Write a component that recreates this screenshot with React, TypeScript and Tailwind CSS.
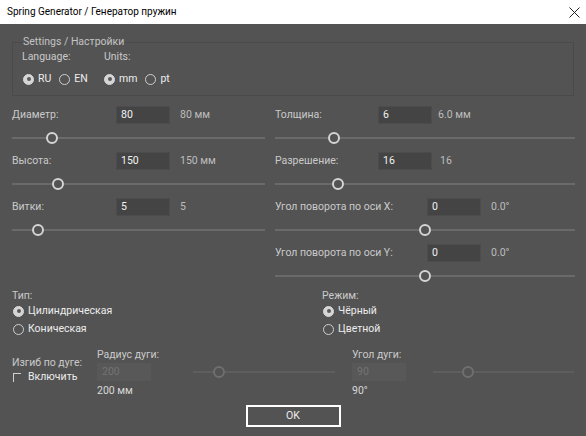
import React from "react";

type FieldDef = {
  label: string;
  value: string;
  note: string;
  labelW: string;
  noteMl: string;
  thumb: number;
};

const leftFields: FieldDef[] = [
  { label: "Диаметр:", value: "80", note: "80 мм", labelW: "w-[104px]", noteMl: "ml-[10px]", thumb: 40 },
  { label: "Высота:", value: "150", note: "150 мм", labelW: "w-[104px]", noteMl: "ml-[10px]", thumb: 46 },
  { label: "Витки:", value: "5", note: "5", labelW: "w-[104px]", noteMl: "ml-[10px]", thumb: 26 },
];

const rightFields: FieldDef[] = [
  { label: "Толщина:", value: "6", note: "6.0 мм", labelW: "w-[103px]", noteMl: "ml-[6px]", thumb: 59 },
  { label: "Разрешение:", value: "16", note: "16", labelW: "w-[103px]", noteMl: "ml-[8px]", thumb: 63 },
  { label: "Угол поворота по оси X:", value: "0", note: "0.0°", labelW: "w-[152px]", noteMl: "ml-[10px]", thumb: 150 },
  { label: "Угол поворота по оси Y:", value: "0", note: "0.0°", labelW: "w-[152px]", noteMl: "ml-[10px]", thumb: 150 },
];

// thumb = distance from the track start to the knob centre
const Slider = ({ thumb, disabled }: { thumb: number; disabled?: boolean }) => (
  <div className="flex items-center w-full">
    <div className={`h-[2px] ${disabled ? "bg-[#5e5e5e]" : "bg-[#6a6a6a]"}`} style={{ width: thumb - 6 }} />
    <div
      className={`w-[12px] h-[12px] rounded-full border-2 shrink-0 ${
        disabled ? "border-[#6f6f6f]" : "border-[#d4d4d4]"
      }`}
    />
    <div className={`h-[2px] flex-1 ${disabled ? "bg-[#5e5e5e]" : "bg-[#6a6a6a]"}`} />
  </div>
);

const NumberBox = ({ value, disabled }: { value: string; disabled?: boolean }) => (
  <div
    className={`w-[54px] h-[18px] shrink-0 flex items-center pl-[4px] border ${
      disabled ? "bg-[#585858] border-[#585858] text-[#737373]" : "bg-[#444444] border-[#4c4c4c] text-[#f2f2f2]"
    }`}
  >
    {value}
  </div>
);

const Field = ({ f }: { f: FieldDef }) => (
  <div className="flex flex-col">
    <div className="flex items-center h-[19px]">
      <span className={`${f.labelW} shrink-0 text-[#cacaca]`}>{f.label}</span>
      <NumberBox value={f.value} />
      <span className={`${f.noteMl} text-[#bdbdbd]`}>{f.note}</span>
    </div>
    <div className="h-[27px] flex items-center">
      <Slider thumb={f.thumb} />
    </div>
  </div>
);

const Radio = ({ checked, label }: { checked?: boolean; label: string }) => (
  <div className="flex items-center gap-[4px]">
    <span
      className={`w-[11px] h-[11px] rounded-full border shrink-0 flex items-center justify-center ${
        checked ? "bg-[#d6d6d6] border-[#d6d6d6]" : "border-[#cfcfcf]"
      }`}
    >
      {checked && <span className="w-[4px] h-[4px] rounded-full bg-[#5a5a5a]" />}
    </span>
    <span className="text-[#ededed]">{label}</span>
  </div>
);

export default function App() {
  return (
    <div
      className="w-[586px] h-[436px] bg-[#535353] flex flex-col text-[10.5px] leading-[14px]"
      style={{ fontFamily: 'Roboto, "Liberation Sans", Arial, sans-serif' }}
    >
      {/* window caption */}
      <div className="h-[24px] bg-white flex items-center justify-between pl-[7px] pr-[6px] text-[10px] text-black">
        <span>Spring Generator / Генератор пружин</span>
        <svg width="11" height="11" viewBox="0 0 11 11">
          <path d="M0.5 0.5 L10.5 10.5 M10.5 0.5 L0.5 10.5" stroke="#222" strokeWidth="1" />
        </svg>
      </div>

      <div className="px-3 pt-[11px] flex flex-col">
        {/* settings group */}
        <fieldset className="border border-[#4a4a4a] h-[61px] px-[9px] pb-[6px]">
          <legend className="text-[#c4c4c4] px-px">Settings / Настройки</legend>
          <div className="grid grid-cols-[82px_auto] text-[#cacaca]">
            <span className="mt-px">Language:</span>
            <span className="mt-px">Units:</span>
            <div className="flex items-center gap-[8px] mt-[8px] ml-[1px]">
              <Radio checked label="RU" />
              <Radio label="EN" />
            </div>
            <div className="flex items-center gap-[8px] mt-[8px]">
              <Radio checked label="mm" />
              <Radio label="pt" />
            </div>
          </div>
        </fieldset>

        {/* numeric parameters */}
        <div className="grid grid-cols-[253px_300px] gap-x-[10px] mt-[9px]">
          <div className="flex flex-col">
            {leftFields.map((f) => (
              <Field key={f.label} f={f} />
            ))}
          </div>
          <div className="flex flex-col">
            {rightFields.map((f) => (
              <Field key={f.label} f={f} />
            ))}
          </div>
        </div>

        {/* type / mode */}
        <div className="flex">
          <div className="w-[310px] flex flex-col">
            <span className="text-[#cacaca] h-[13px]">Тип:</span>
            <div className="h-[18px] flex items-center ml-[1px]">
              <Radio checked label="Цилиндрическая" />
            </div>
            <div className="h-[18px] flex items-center ml-[1px]">
              <Radio label="Коническая" />
            </div>
          </div>
          <div className="flex flex-col">
            <span className="text-[#cacaca] h-[13px]">Режим:</span>
            <div className="h-[18px] flex items-center ml-[1px]">
              <Radio checked label="Чёрный" />
            </div>
            <div className="h-[18px] flex items-center ml-[1px]">
              <Radio label="Цветной" />
            </div>
          </div>
        </div>

        {/* arc bending */}
        <div className="flex mt-[10px]">
          <div className="w-[85px] flex flex-col pt-[8px]">
            <span className="text-[#cacaca]">Изгиб по дуге:</span>
            <div className="flex items-center gap-[7px] ml-px">
              <span className="w-[8px] h-[9px] border-t border-l border-[#d0d0d0]" />
              <span className="text-[#ededed]">Включить</span>
            </div>
          </div>
          <div className="w-[96px] flex flex-col">
            <span className="text-[#cacaca]">Радиус дуги:</span>
            <div className="mt-px">
              <NumberBox value="200" disabled />
            </div>
            <span className="h-[20px] flex items-center text-[#d8d8d8]">200 мм</span>
          </div>
          <div className="w-[142px] pt-[15px]">
            <div className="h-[18px] flex items-center">
              <Slider thumb={26} disabled />
            </div>
          </div>
          <div className="w-[17px]" />
          <div className="w-[81px] flex flex-col">
            <span className="text-[#cacaca]">Угол дуги:</span>
            <div className="mt-px">
              <NumberBox value="90" disabled />
            </div>
            <span className="h-[20px] flex items-center text-[#d8d8d8]">90°</span>
          </div>
          <div className="flex-1 pt-[15px]">
            <div className="h-[18px] flex items-center">
              <Slider thumb={35} disabled />
            </div>
          </div>
        </div>

        <div className="flex justify-center mt-[4px]">
          <button className="w-[95px] h-[22px] border-2 border-white text-[#ededed] flex items-center justify-center">
            OK
          </button>
        </div>
      </div>
    </div>
  );
}
